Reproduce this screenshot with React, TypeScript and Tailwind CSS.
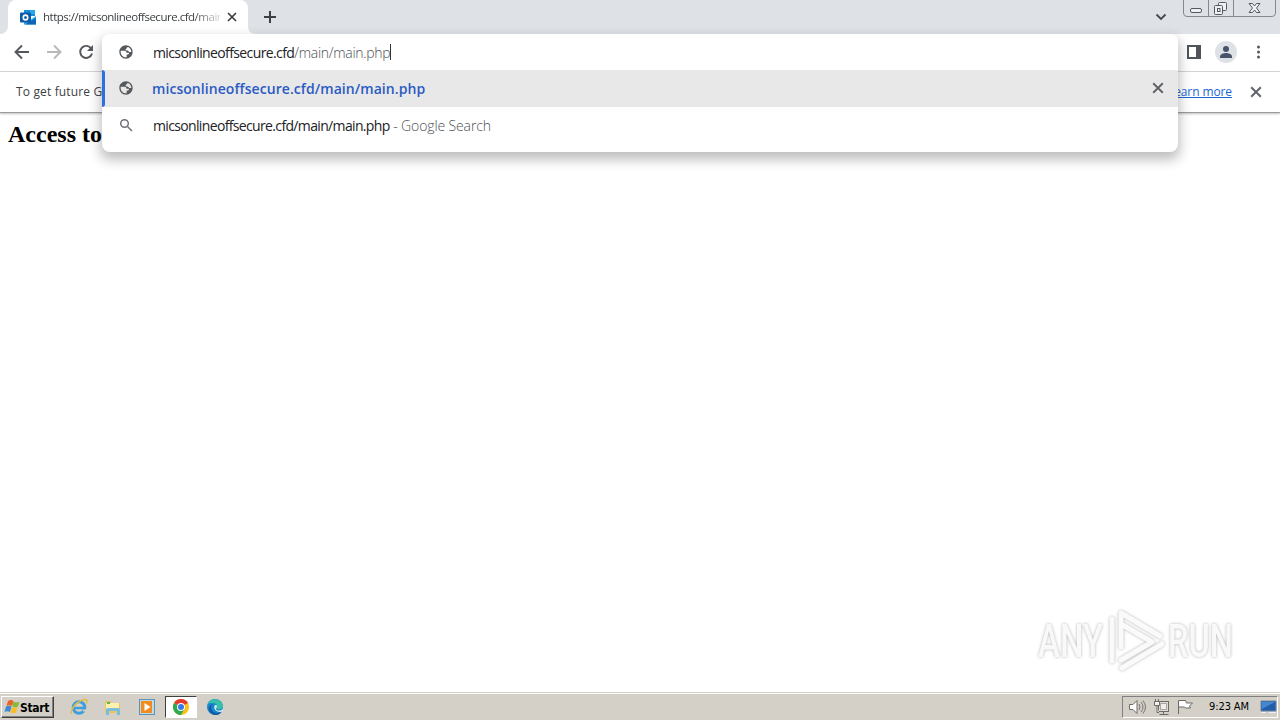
import React from "react";

const ui = "font-['Open_Sans','Noto_Sans',sans-serif]";
const tahoma = "font-['DejaVu_Sans_Condensed','DejaVu_Sans',sans-serif]";

function Globe() {
  return (
    <svg width="16" height="16" viewBox="0 0 24 24" fill="#55595d" className="shrink-0">
      <path d="M12 2C6.480 2 2 6.480 2 12s4.480 10 10 10 10-4.480 10-10S17.520 2 12 2zM4 12c0-.6.100-1.200.250-1.750L9 10.300c2.600-.1 3.400 1 3.700 2.900h3.800c.2 2-1 2.800-3.500 2.800v4c-4.800.500-9-3.300-9-8zM18.200 17c-.4-.8-1-1.200-1.700-1.300M12.500 9.800c-2-.2-1.300-2.500.2-2.700C13 5 14 4.700 15 4.500c3 1.200 5 4.300 5 7.500h-3.500c-.8-2.400-2-2.300-4-2.200z" fillRule="evenodd" />
    </svg>
  );
}

function Cross({ size = 10, color = "#45494d", w = 1.8 }: { size?: number; color?: string; w?: number }) {
  return (
    <svg width={size} height={size} viewBox="0 0 10 10" stroke={color} strokeWidth={w} className="shrink-0">
      <path d="M1 1l8 8M9 1L1 9" />
    </svg>
  );
}

function TabStrip() {
  return (
    <div className="relative flex h-[34px] shrink-0 bg-[#dee1e6]">
      <div className="ml-2 flex h-full w-60 items-center rounded-t-lg bg-white pl-3 pr-[11px]">
        <svg width="16" height="16" viewBox="0 0 16 16" className="shrink-0">
          <path d="M4 1h11v6H4z" fill="#1490df" />
          <path d="M10 1h5v4h-5z" fill="#28a8ea" />
          <path d="M4 5h6v4H4z" fill="#0364b8" />
          <path d="M4 8l6 3 6-4v8.500H4z" fill="#28a8ea" />
          <path d="M5 15.500L16 9v6.500z" fill="#1066b5" />
          <rect y="3.500" width="11" height="10" rx="1" fill="#0a5ca8" />
          <ellipse cx="5.500" cy="8.500" rx="2.200" ry="2.400" fill="none" stroke="white" strokeWidth="1.600" />
        </svg>
        <div className={`ml-[7px] w-[177px] overflow-hidden whitespace-nowrap text-[11.5px] leading-4 tracking-[-0.49px] text-[#3c4043] [mask-image:linear-gradient(to_right,black_150px,transparent_182px)] ${ui}`}>
          https://micsonlineoffsecure.cfd/main
        </div>
        <div className="ml-auto flex"><Cross size={10} color="#3c4043" w={1.7} /></div>
      </div>
      <svg width="44" height="34" viewBox="0 0 44 34" stroke="#3c4043" strokeWidth="2">
        <path d="M0 34V26c0 5 3 8 8 8z" fill="white" stroke="none" />
        <path d="M16 17h12M22 11v12" />
      </svg>
      <svg width="12" height="8" viewBox="0 0 12 8" fill="none" stroke="#45494d" strokeWidth="1.800" className="ml-auto mr-4 mt-[13px]">
        <path d="M1.500 1.500L6 6l4.500-4.500" />
      </svg>
      <svg width="97" height="17" viewBox="0 0 97 17" fill="none" stroke="#85898f" className="shrink-0">
        <path d="M.5 0v13q0 3.500 3.500 3.500h85q3.500 0 3.500-3.500V0M25.500 0v16M50.500 0v16" />
        <g stroke="#565a60" fill="#eef0f3">
          <rect x="7.500" y="8.500" width="11" height="4" rx="1.500" />
          <rect x="35.500" y="2.500" width="8" height="8" rx="1" />
          <rect x="31.500" y="5.500" width="8" height="9" rx="1" />
          <rect x="34.500" y="8.500" width="2.500" height="3" />
          <path d="M66 3.500h3.500l2 2.500 2-2.500H77l-3.500 4.500 3.500 4.500h-3.500l-2-2.500-2 2.500H66l3.500-4.500z" />
        </g>
      </svg>
      <div className="absolute bottom-0 left-0 h-2 w-2 bg-white"><div className="h-2 w-2 rounded-br-lg bg-[#dee1e6]" /></div>
    </div>
  );
}

function Toolbar() {
  return (
    <div className="flex h-[38px] shrink-0 items-center border-b border-[#d5d7da] bg-white px-[14px] pb-px">
      <svg width="80" height="16" viewBox="0 0 80 16" fill="none" strokeWidth="1.900">
        <path d="M15 8H2M8 1.500L1.500 8 8 14.500" stroke="#54585c" />
        <path d="M33 8h13M40 1.500L46.500 8 40 14.500" stroke="#b6b8ba" />
        <path d="M77.300 4.700A6 6 0 1 0 78 9.500" stroke="#54585c" />
        <path d="M79 1v6h-6z" fill="#54585c" />
      </svg>
      <svg width="14" height="14" viewBox="0 0 14 14" className="ml-auto">
        <path d="M0 0h14v14H0zM2 2v10h7V2z" fill="#505458" fillRule="evenodd" />
      </svg>
      <svg width="22" height="22" viewBox="0 0 22 22" className="ml-[14px]">
        <circle cx="11" cy="11" r="11" fill="#dee1e6" />
        <circle cx="11" cy="8" r="3" fill="#48526a" />
        <path d="M5 17v-1.500C5 13 9 12 11 12s6 1 6 3.500V17z" fill="#48526a" />
      </svg>
      <svg width="4" height="14" viewBox="0 0 4 14" fill="#54585c" className="ml-[19px] mr-[6px]">
        <circle cx="2.500" cy="2" r="1.500" /><circle cx="2.500" cy="7" r="1.500" /><circle cx="2.500" cy="12" r="1.500" />
      </svg>
    </div>
  );
}

function Omnibox() {
  return (
    <div className={`absolute left-[102px] top-[34px] h-[118px] w-[1076px] whitespace-nowrap rounded-lg bg-white text-[14px] text-[#202124] shadow-[0_6px_12px_2px_rgba(60,60,60,0.32)] ${ui}`}>
      <div className="flex h-9 items-center pl-4">
        <Globe />
        <span className="ml-[19px] flex items-center">
          <span className="tracking-[-0.61px]">micsonlineoffsecure.cfd</span>
          <span className="font-light tracking-[-0.3px] text-[#4b4f53]">/main/main.php</span>
          <span className="h-4 w-px bg-[#333333]" />
        </span>
      </div>
      <div className="relative flex h-[37px] items-center bg-[#e8e8e8] pb-px pl-4 pr-[14px]">
        <span className="absolute left-0 top-0 h-full w-[3px] rounded-r-sm bg-[#2b6fe0]" />
        <Globe />
        <span className="ml-[18px] font-semibold tracking-[0.06px] text-[#2a5bc4]">micsonlineoffsecure.cfd/main/main.php</span>
        <div className="ml-auto flex"><Cross size={12} color="#5f6368" w={1.6} /></div>
      </div>
      <div className="flex h-[37px] items-center pl-4">
        <svg width="16" height="16" viewBox="0 0 16 16" fill="none" stroke="#6f7377" strokeWidth="1.500" className="-mt-px">
          <circle cx="6.500" cy="6.500" r="3.800" /><path d="M9.500 9.500l4.500 4.500" />
        </svg>
        <span className="ml-[19px] tracking-[-0.65px]">micsonlineoffsecure.cfd/main/main.php</span>
        <span className="whitespace-pre font-light tracking-[-0.12px] text-[#4b4f53]"> - Google Search</span>
      </div>
    </div>
  );
}

function Watermark() {
  return (
    <svg width="210" height="76" viewBox="0 0 210 76" className="mb-[15px] mr-[35px] [filter:drop-shadow(0_0_1.5px_rgba(0,0,0,0.3))]">
      <g fill="#f9f9f9" fontFamily="Roboto" fontSize="47" fontWeight="500">
        <text x="3" y="56" textLength="65" lengthAdjust="spacingAndGlyphs">ANY</text>
        <text x="133" y="56" textLength="65" lengthAdjust="spacingAndGlyphs">RUN</text>
      </g>
      <g fill="none" stroke="#fafafa" strokeWidth="5" strokeLinejoin="round" strokeLinecap="round">
        <path d="M86 46V12l39 23M86 23l31 18-31 18M77 18v42M87 67l40-24" />
      </g>
    </svg>
  );
}

function Taskbar() {
  return (
    <div className={`flex h-7 shrink-0 items-center border-t border-[#d4d0c8] bg-[#d4d0c8] text-[11px] text-black shadow-[inset_0_1px_0_white] ${tahoma}`}>
      <div className="ml-px mt-px flex h-[22px] w-[53px] items-center border border-b-[#404040] border-l-white border-r-[#404040] border-t-white pl-[2px] shadow-[inset_-1px_-1px_#808080]">
        <svg width="17" height="16" viewBox="0 0 17 16" className="shrink-0">
          <path d="M4 2q3-2 5.500 0L8 7Q5 5.500 2.500 7z" fill="#ee6029" />
          <path d="M9.500 2.500q3 1.700 6 0L14 7.500q-3 1.500-5.500 0z" fill="#83bb38" />
          <path d="M2 7.500q3-1.500 5.500 0L6 13Q3 11.500.5 13z" fill="#3a8cdb" />
          <path d="M8 8q3 1.500 5.500 0l-1.500 5.500q-3 1.500-5.500 0z" fill="#fbbd25" />
        </svg>
        <span className="-ml-px mt-px text-[12px] font-bold tracking-[-0.3px]">Start</span>
      </div>
      <div className="ml-4 mt-px flex items-center">
        <svg width="18" height="18" viewBox="0 0 18 18" fill="none">
          <circle cx="9" cy="9.500" r="5.800" stroke="#3e9fdc" strokeWidth="3" />
          <path d="M4 10h11" stroke="#3e9fdc" strokeWidth="2.500" />
          <path d="M13 11.500h4v2h-4z" fill="#d4d0c8" />
          <path d="M1.500 16C0 12 6 3 15 1.500c3 0 2 3 1 4" stroke="#e4bd3f" strokeWidth="1.500" />
        </svg>
        <svg width="18" height="18" viewBox="0 0 18 18" className="ml-4">
          <path d="M1 3h6l1 2h8v10H1z" fill="#e8c665" />
          <path d="M2 5h13v6H2z" fill="#fff0ad" /><path d="M3 4h3v2H3z" fill="#58b957" />
          <path d="M2 17v-5q0-2 2-2h10q2 0 2 2v5h-3v-4H5v4z" fill="#7bbddd" />
        </svg>
        <svg width="18" height="18" viewBox="0 0 18 18" className="ml-4">
          <rect x="1.500" y="1.500" width="15" height="15" fill="#b9dced" stroke="#5e91b7" />
          <rect x="3" y="3" width="11" height="12" fill="#f28a1c" />
          <circle cx="8.500" cy="9" r="5" fill="#f58b1d" /><path d="M6.500 5l6 4-6 4z" fill="white" />
        </svg>
        <div className="ml-[9px] flex h-[22px] w-8 items-center justify-center border border-b-white border-l-[#404040] border-r-white border-t-[#404040] bg-white">
          <svg width="16" height="16" viewBox="0 0 16 16">
            <circle cx="8" cy="8" r="8" fill="#fbc116" />
            <path d="M8 8L1.070 4A8 8 0 0 1 14.930 4z" fill="#e33b2e" />
            <path d="M8 8L1.070 4A8 8 0 0 0 8 16l3.500-6z" fill="#2da94f" />
            <circle cx="8" cy="8" r="4" fill="white" /><circle cx="8" cy="8" r="3" fill="#3b78e7" />
          </svg>
        </div>
        <svg width="18" height="18" viewBox="0 0 18 18" className="ml-[9px]">
          <circle cx="9" cy="9" r="8" fill="#1687d0" />
          <path d="M2 6C5-1 16 0 17 8c0 4-5 4-7 2 2-3 0-5-3-5-2 0-4 0-5 1z" fill="#37bfa8" />
          <path d="M7 6c-4 3-1 9 4 9 2 0 4-1 5-2-2 5-8 5-11 2-4-4-2-8 2-9z" fill="#1559a0" />
          <path d="M9 7c3 0 2 2 1 4 1 2 4 2 7 0v2c-5 3-11-2-8-6z" fill="#d4e9ed" />
        </svg>
      </div>
      <div className="ml-auto mr-[2px] mt-px flex h-[22px] w-[156px] items-center border border-b-white border-l-[#808080] border-r-white border-t-[#808080] pl-[6px]">
        <svg width="65" height="18" viewBox="0 0 65 18" fill="none" stroke="#6c6a66">
          <path d="M.5 6.500H4l4-4v13l-4-4H.5z" fill="white" />
          <path d="M10 6q2 3 0 6M12 4q4 5 0 10M14 2.500q5 6.500 0 13" strokeWidth=".9" />
          <rect x="29.500" y="3.500" width="10" height="10" fill="#dedcd6" />
          <rect x="31.500" y="5.500" width="6" height="6" fill="#efeeea" stroke="#aaa7a1" />
          <path d="M30.500 16.500h9M34.500 14v2M25.500 3.500h5v4h-5zM26.500 1v2.500M29.500 1v2.500M28 8v6.500h2" fill="#f5f4f1" />
          <path d="M49.500 16V2.500h7l1 2.500h6l-3 3 1 2h-5l-1-1h-6" fill="white" />
        </svg>
        <span className="ml-[15px] whitespace-nowrap text-[11px] tracking-[-0.1px]">9:23 AM</span>
        <svg width="17" height="16" viewBox="0 0 17 16" className="ml-auto">
          <path d="M1 2h15v10H1z" fill="#235ca9" stroke="#6b88a4" /><path d="M2 3h13L2 10z" fill="#4388d1" />
          <path d="M1 13h5v1H1zM9 13h7v1H9z" fill="#eef" />
        </svg>
      </div>
    </div>
  );
}

export default function App() {
  return (
    <div className="relative flex h-[720px] w-[1280px] flex-col overflow-hidden bg-white">
      <TabStrip />
      <Toolbar />
      <div className={`flex h-[41px] shrink-0 items-center justify-between border-b border-[#999b9e] bg-white pl-4 pr-[18px] text-[12px] text-[#3c4043] shadow-[0_1px_2px_rgba(0,0,0,0.25)] ${ui}`}>
        <span className="whitespace-nowrap tracking-[0.15px]">To get future G</span>
        <div className="flex items-center gap-[18px]">
          <a className="tracking-[-0.1px] text-[#1967d2] underline">Learn more</a>
          <Cross size={12} color="#5f6368" w={1.6} />
        </div>
      </div>
      <main className="flex flex-1 flex-col justify-between">
        <h2 className="ml-2 mt-2 whitespace-nowrap font-['Liberation_Serif',serif] text-[24px] font-bold leading-[27px] text-black">Access to</h2>
        <div className="flex justify-end"><Watermark /></div>
      </main>
      <Taskbar />
      <Omnibox />
    </div>
  );
}
